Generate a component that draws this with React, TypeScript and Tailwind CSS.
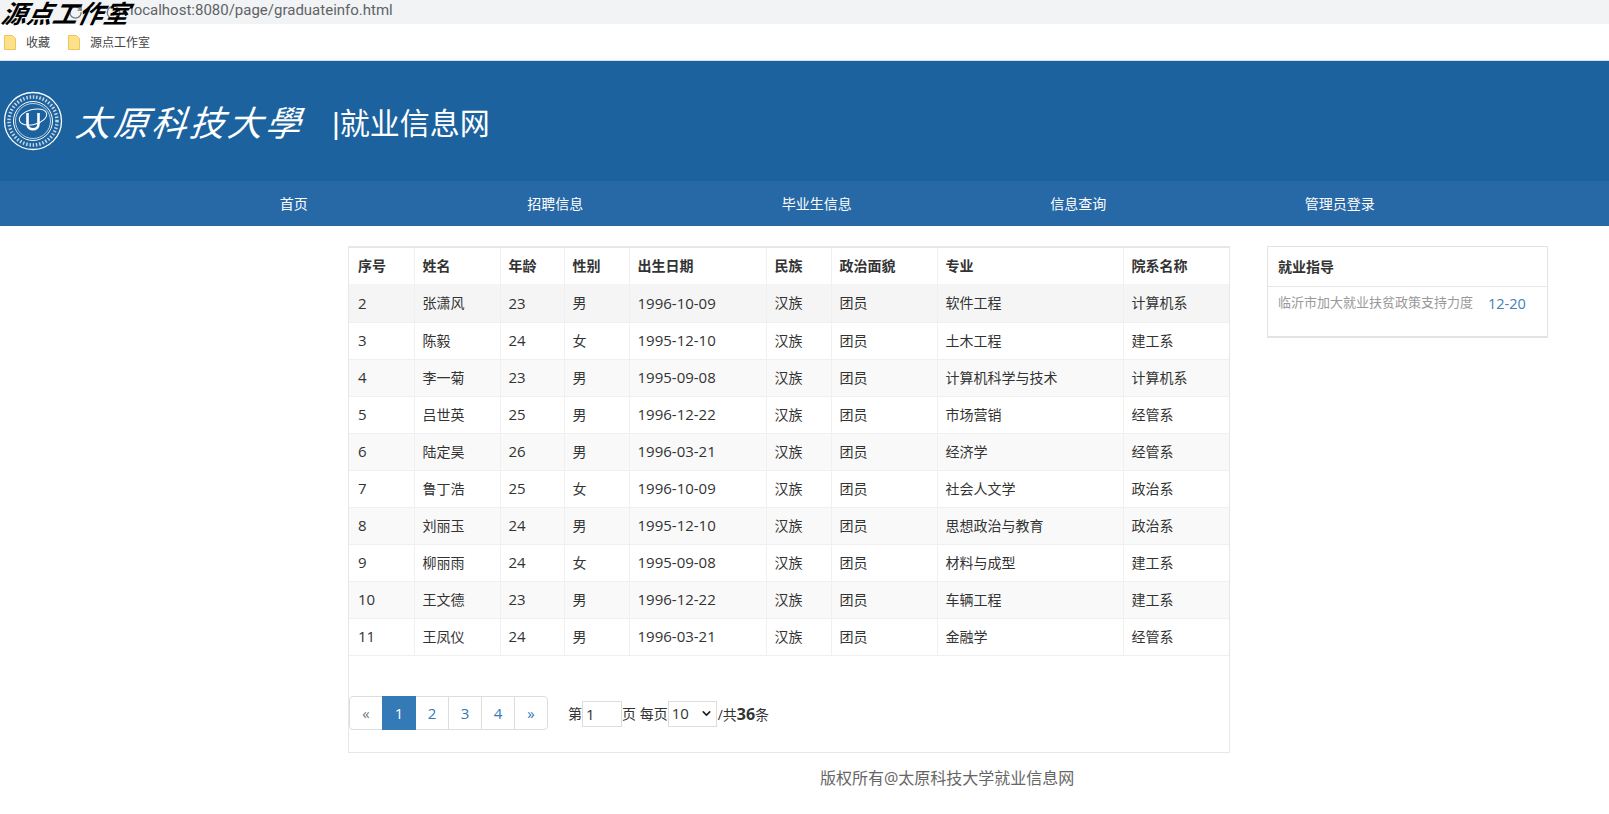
import { ChevronDown, Info, RotateCw } from 'lucide-react'

const rows = [
  ['2', '张潇风', '23', '男', '1996-10-09', '汉族', '团员', '软件工程', '计算机系'],
  ['3', '陈毅', '24', '女', '1995-12-10', '汉族', '团员', '土木工程', '建工系'],
  ['4', '李一菊', '23', '男', '1995-09-08', '汉族', '团员', '计算机科学与技术', '计算机系'],
  ['5', '吕世英', '25', '男', '1996-12-22', '汉族', '团员', '市场营销', '经管系'],
  ['6', '陆定昊', '26', '男', '1996-03-21', '汉族', '团员', '经济学', '经管系'],
  ['7', '鲁丁浩', '25', '女', '1996-10-09', '汉族', '团员', '社会人文学', '政治系'],
  ['8', '刘丽玉', '24', '男', '1995-12-10', '汉族', '团员', '思想政治与教育', '政治系'],
  ['9', '柳丽雨', '24', '女', '1995-09-08', '汉族', '团员', '材料与成型', '建工系'],
  ['10', '王文德', '23', '男', '1996-12-22', '汉族', '团员', '车辆工程', '建工系'],
  ['11', '王凤仪', '24', '男', '1996-03-21', '汉族', '团员', '金融学', '经管系'],
]

const heads = ['序号', '姓名', '年龄', '性别', '出生日期', '民族', '政治面貌', '专业', '院系名称']
const colWidths = [65, 86, 64, 65, 137, 65, 106, 186, 106]
const numericCols = [0, 2, 4]
const navItems = ['首页', '招聘信息', '毕业生信息', '信息查询', '管理员登录']

function Folder() {
  return (
    <svg width="12" height="15" viewBox="0 0 12 15">
      <path d="M0.5 0.5H8.5L11.5 3.5V14.5H0.5Z" fill="#fde08a" stroke="#eec65c" />
    </svg>
  )
}

function Emblem() {
  return (
    <svg width="60" height="60" viewBox="0 0 60 60" fill="none" stroke="white">
      <circle cx="30" cy="30" r="28.5" strokeWidth="1.3" />
      <circle cx="30" cy="30" r="24" strokeWidth="3.5" strokeDasharray="1.5 1.8" opacity="0.75" />
      <circle cx="30" cy="30" r="19.5" strokeWidth="1" />
      <circle cx="30" cy="30" r="17.5" strokeWidth="0.7" />
      <ellipse cx="30" cy="26" rx="14" ry="7.5" strokeWidth="1" transform="rotate(-15 30 26)" />
      <path d="M24.5 22V33C24.5 40 35.5 40 35.5 33V22" strokeWidth="2.6" />
    </svg>
  )
}

export default function App() {
  return (
    <div className="relative w-[1609px] h-[814px] overflow-hidden bg-white text-[#333] text-[14px] font-['Open_Sans','Noto_Sans_CJK_SC',sans-serif]">
      {/* browser chrome */}
      <div className="absolute left-[2px] top-0 text-[25px] leading-[29px] tracking-[0.5px] font-bold italic text-black -skew-x-12 font-['Liberation_Sans','Noto_Sans_CJK_SC',sans-serif]">
        源点工作室
      </div>
      <div className="h-[24px] bg-[#f1f3f4] flex items-center pl-[68px] text-[15px] leading-[20px] text-[#5f6368] font-['Roboto',sans-serif]">
        <RotateCw size={15} color="#777" />
        <Info size={15} color="#777" className="ml-[23px]" />
        <span className="ml-[9px] -mt-[4px]">localhost:8080/page/graduateinfo.html</span>
      </div>
      <div className="h-[37px] flex items-center pl-[4px] text-[12px] text-[#444] font-['Noto_Sans_CJK_SC',sans-serif] border-b border-[#d5e3f0]">
        <Folder />
        <span className="ml-[10px]">收藏</span>
        <span className="ml-[18px] flex"><Folder /></span>
        <span className="ml-[10px]">源点工作室</span>
      </div>

      {/* header */}
      <div className="h-[120px] bg-[#1c629e] flex items-center pl-[3px] text-white">
        <Emblem />
        <span className="ml-[13px] text-[35px] leading-[60px] italic tracking-[3px] font-['Noto_Sans_CJK_TC',sans-serif] font-normal -skew-x-6">
          太原科技大學
        </span>
        <span className="ml-[28px] mt-[6px] text-[30px] leading-[40px] font-['Liberation_Sans','Noto_Sans_CJK_SC',sans-serif]">
          |就业信息网
        </span>
      </div>

      {/* nav */}
      <div className="h-[45px] bg-[#2768a6] flex pl-[163px] text-white font-['Noto_Sans_CJK_SC',sans-serif]">
        {navItems.map(item => (
          <div key={item} className="w-[261.5px] text-center leading-[45px]">{item}</div>
        ))}
      </div>

      {/* main */}
      <div className="flex pl-[348px] pt-[20px] items-start">
        <div className="w-[882px] h-[507px] border border-t-2 border-[#e7e7e7]">
          <table className="table-fixed w-[880px] border-collapse">
            <colgroup>
              {colWidths.map((w, i) => (
                <col key={i} style={{ width: w }} />
              ))}
            </colgroup>
            <thead>
              <tr className="h-[36px]">
                {heads.map(h => (
                  <th key={h} className="px-[8px] pb-[2px] first:pl-[9px] text-left font-bold border-r border-[#f0f0f0] last:border-r-0 font-['Noto_Sans_CJK_SC',sans-serif]">{h}</th>
                ))}
              </tr>
            </thead>
            <tbody>
              {rows.map((row, i) => (
                <tr key={row[0]} className={`border-b border-[#f0f0f0] ${i === 0 ? 'h-[38px] bg-[#f5f5f5]' : i % 2 === 0 ? 'h-[37px] bg-[#f9f9f9]' : 'h-[37px] bg-white'}`}>
                  {row.map((cell, j) => (
                    <td key={j} className={`px-[8px] first:pl-[9px] border-r border-[#f0f0f0] last:border-r-0 ${numericCols.includes(j) ? 'text-[15px]' : ''}`}>{cell}</td>
                  ))}
                </tr>
              ))}
            </tbody>
          </table>

          {/* pagination */}
          <div className="mt-[40px] flex items-center">
            <div className="flex h-[34px] border border-[#ddd] rounded-[4px] leading-[32px] text-center text-[15px] text-[#337ab7]">
              <span className="w-[32px] text-[#777]">«</span>
              <span className="w-[34px] -my-[1px] h-[34px] leading-[34px] bg-[#337ab7] text-white">1</span>
              <span className="w-[33px] border-r border-[#ddd]">2</span>
              <span className="w-[33px] border-r border-[#ddd]">3</span>
              <span className="w-[33px] border-r border-[#ddd]">4</span>
              <span className="w-[32px]">»</span>
            </div>
            <div className="ml-[20px] mt-[2px] flex items-center">
              <span>第</span>
              <input readOnly value="1" className="w-[40px] h-[26px] border border-[#ddd] px-[3px] text-[15px] outline-none" />
              <span>页 每页</span>
              <div className="w-[49px] h-[26px] border border-[#ddd] flex items-center justify-between px-[3px] text-[15px]">
                <span>10</span>
                <ChevronDown size={13} strokeWidth={3} color="#222" />
              </div>
              <span className="ml-[1px]">/共<b className="text-[16px]">36</b>条</span>
            </div>
          </div>
        </div>

        {/* side panel */}
        <div className="ml-[37px] w-[281px] h-[92px] border border-[#e3e3e3] border-b-2">
          <div className="h-[40px] border-b border-[#e7e7e7] px-[10px] leading-[40px] font-bold">就业指导</div>
          <div className="flex px-[10px] items-start">
            <span className="mt-[5px] text-[13px] leading-[20px] text-[#999] font-['Noto_Sans_CJK_SC',sans-serif]">临沂市加大就业扶贫政策支持力度</span>
            <span className="ml-[15px] mt-[7px] text-[14.5px] leading-[20px] text-[#3d82b8]">12-20</span>
          </div>
        </div>
      </div>

      {/* footer */}
      <div className="mt-[15px] pl-[820px] text-[16px] leading-[20px] text-[#666]">版权所有@太原科技大学就业信息网</div>
    </div>
  )
}
